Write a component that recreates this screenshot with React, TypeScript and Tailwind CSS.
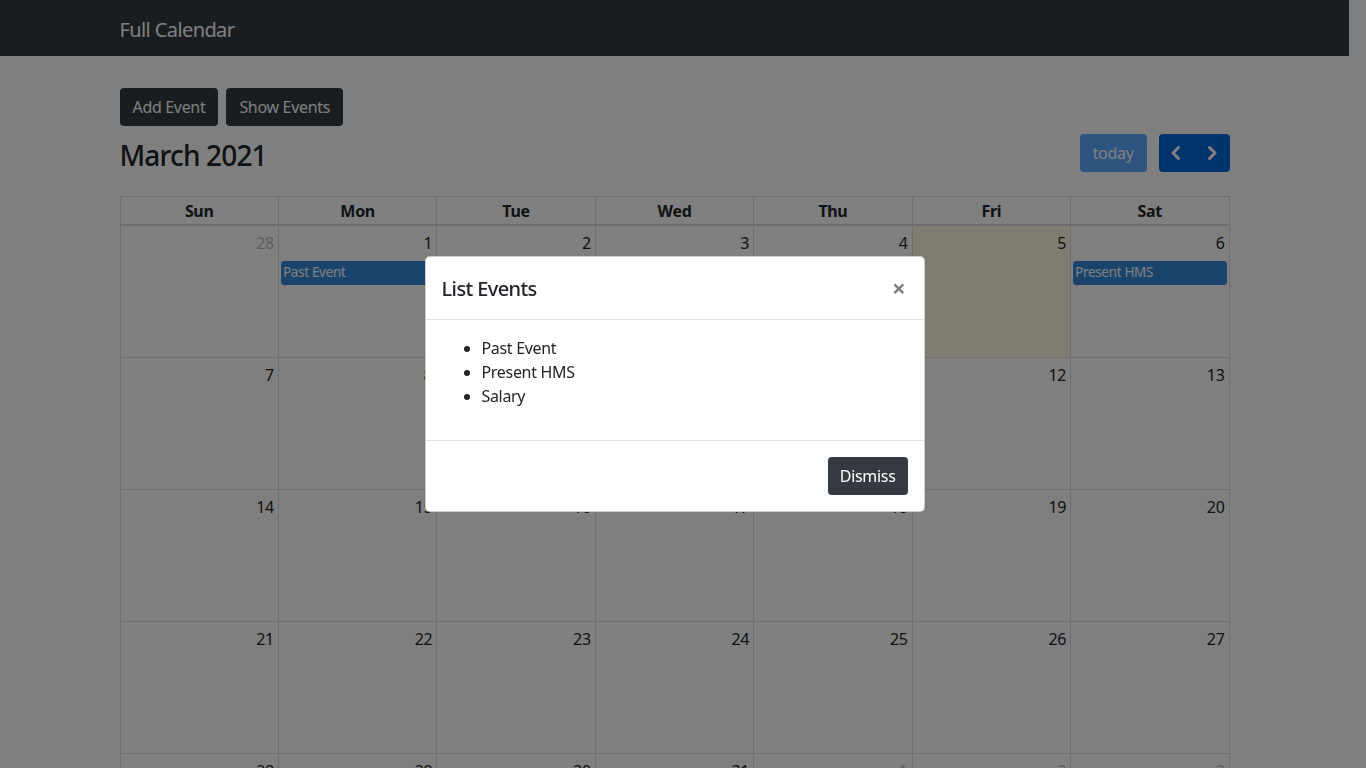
import React from 'react';

const font = { fontFamily: '"Noto Sans", "Open Sans", sans-serif' };

type Ev = { title: string; day: string };

const weeks: { n: number; muted?: boolean; today?: boolean }[][] = [
  [{ n: 28, muted: true }, { n: 1 }, { n: 2 }, { n: 3 }, { n: 4 }, { n: 5, today: true }, { n: 6 }],
  [{ n: 7 }, { n: 8 }, { n: 9 }, { n: 10 }, { n: 11 }, { n: 12 }, { n: 13 }],
  [{ n: 14 }, { n: 15 }, { n: 16 }, { n: 17 }, { n: 18 }, { n: 19 }, { n: 20 }],
  [{ n: 21 }, { n: 22 }, { n: 23 }, { n: 24 }, { n: 25 }, { n: 26 }, { n: 27 }],
  [{ n: 28 }, { n: 29 }, { n: 30 }, { n: 31 }, { n: 1, muted: true }, { n: 2, muted: true }, { n: 3, muted: true }],
  [{ n: 4, muted: true }, { n: 5, muted: true }, { n: 6, muted: true }, { n: 7, muted: true }, { n: 8, muted: true }, { n: 9, muted: true }, { n: 10, muted: true }],
];

const events: Ev[] = [
  { title: 'Past Event', day: '0-1' },
  { title: 'Salary', day: '1-3' },
  { title: 'Present HMS', day: '0-6' },
];

const dayNames = ['Sun', 'Mon', 'Tue', 'Wed', 'Thu', 'Fri', 'Sat'];

function Chevron({ dir }: { dir: 'left' | 'right' }) {
  return (
    <svg width="14" height="16" viewBox="0 0 14 16" fill="none">
      <path
        d={dir === 'left' ? 'M9.5 2.5 L4 8 L9.5 13.5' : 'M4.5 2.5 L10 8 L4.5 13.5'}
        stroke="currentColor"
        strokeWidth="3"
        strokeLinecap="round"
        strokeLinejoin="round"
      />
    </svg>
  );
}

export default function App() {
  return (
    <div className="h-screen overflow-hidden bg-white pr-[17px] text-[#212529] tracking-[-0.02em]" style={font}>
      {/* Navbar */}
      <nav className="h-[56px] bg-[#343a40] flex items-center">
        <div className="w-[1110px] mx-auto pt-[3px]">
          <span className="text-[20px] text-white leading-[30px] tracking-[-0.03em]">Full Calendar</span>
        </div>
      </nav>

      <div className="w-[1110px] mx-auto pt-[32px]">
        <div className="flex gap-2">
          <button className="h-[38px] px-[13px] rounded bg-[#343a40] text-white text-[16px]">Add Event</button>
          <button className="h-[38px] px-[13px] rounded bg-[#343a40] text-white text-[16px]">Show Events</button>
        </div>

        {/* Toolbar */}
        <div className="mt-2 mb-6 flex items-center justify-between h-[38px]">
          <h2 className="text-[28px] font-medium leading-[38px] pt-[3px] tracking-[-0.03em]">March 2021</h2>
          <div className="flex items-center gap-3">
            <button className="h-[38px] px-[13px] rounded bg-[#007bff] opacity-[0.65] text-white text-[16px]">today</button>
            <div className="flex h-[38px] rounded bg-[#0069d9] text-white overflow-hidden">
              <button className="w-[35px] flex items-center justify-center"><Chevron dir="left" /></button>
              <button className="w-[36px] flex items-center justify-center"><Chevron dir="right" /></button>
            </div>
          </div>
        </div>

        {/* Grid */}
        <div className="border-l border-t border-[#dddddd]">
          <div className="grid grid-cols-7 border-b-2 border-[#dddddd]">
            {dayNames.map(d => (
              <div key={d} className="h-[27px] border-r border-[#dddddd] text-center font-bold text-[16px] leading-[28px]">
                {d}
              </div>
            ))}
          </div>
          {weeks.map((week, wi) => (
            <div key={wi} className="grid grid-cols-7">
              {week.map((cell, ci) => {
                const ev = events.filter(e => e.day === `${wi}-${ci}`);
                return (
                  <div
                    key={ci}
                    className={`h-[132px] border-r border-b border-[#dddddd] ${cell.today ? 'bg-[#fffadf]' : ''}`}
                  >
                    <div className={`text-right px-1 pt-[5px] text-[16px] leading-6 ${cell.muted ? 'opacity-30' : ''}`}>
                      {cell.n}
                    </div>
                    {ev.map(e => (
                      <div
                        key={e.title}
                        className="mt-[6px] mx-[2px] rounded-[3px] border border-[#3788d8] bg-[#3788d8] text-white text-[13.5px] leading-[21px] px-[1px] pb-[1px]"
                      >
                        {e.title}
                      </div>
                    ))}
                  </div>
                );
              })}
            </div>
          ))}
        </div>
      </div>

      {/* Modal backdrop */}
      <div className="fixed inset-0 bg-black/50" />

      {/* Modal */}
      <div className="fixed inset-0 pr-[17px] flex items-center justify-center">
        <div className="w-[500px] bg-white rounded-[5px] border border-black/20 flex flex-col">
          <div className="flex items-center justify-between px-4 h-[63px] border-b border-[#dee2e6]">
            <h5 className="text-[20px] font-medium leading-[30px] pt-[2px] tracking-[-0.03em]">List Events</h5>
            <button className="text-[24px] font-bold leading-none text-black opacity-50 pr-[2px]">×</button>
          </div>
          <div className="p-4">
            <ul className="list-disc pl-10 mb-4 text-[16px] leading-6">
              <li>Past Event</li>
              <li>Present HMS</li>
              <li>Salary</li>
            </ul>
          </div>
          <div className="flex justify-end p-4 border-t border-[#dee2e6]">
            <button className="h-[38px] px-3 rounded bg-[#343a40] text-white text-[16px]">Dismiss</button>
          </div>
        </div>
      </div>
    </div>
  );
}
